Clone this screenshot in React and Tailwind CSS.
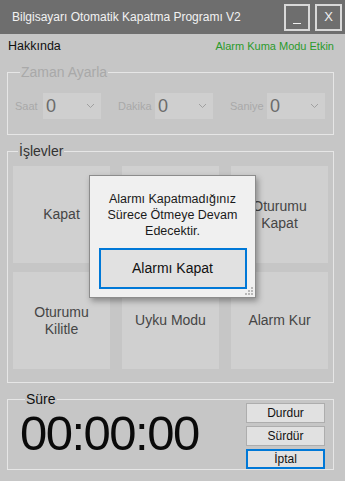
import React from 'react';

const font = { fontFamily: '"Liberation Sans", Arial, sans-serif' };

const Combo = ({ label, labelW }) => (
  <div className="flex items-center">
    <span className={`text-[11px] text-[#a9a9a9] ${labelW}`}>{label}</span>
    <div className="w-[58px] h-[26px] bg-[#cfcfcf] flex items-center justify-between pl-[3px] pr-[6px]">
      <span className="text-[18px] leading-none text-[#6b6b6b]">0</span>
      <svg width="9" height="6" viewBox="0 0 9 6">
        <path d="M1 1 L4.5 4.5 L8 1" fill="none" stroke="#a0a0a0" strokeWidth="1" />
      </svg>
    </div>
  </div>
);

const Tile = ({ children }) => (
  <div className="h-[97px] bg-[#d0d0d0] flex items-center justify-center text-center text-[14px] leading-[17px] text-[#454545]">
    {children}
  </div>
);

const SmallBtn = ({ children, active }) => (
  <div
    className={`h-[20px] flex items-center justify-center text-[12px] text-[#111] bg-[#e1e1e1] ${
      active ? 'border-2 border-[#0078d7]' : 'border border-[#adadad]'
    }`}
  >
    {children}
  </div>
);

const App = () => {
  return (
    <div className="w-[345px] h-[481px] bg-[#c6c6c6] relative overflow-hidden" style={font}>
      {/* title bar */}
      <div className="h-[34px] bg-[#6e6e6e] flex items-center pl-[12px] pr-[3px]">
        <span className="text-[12px] text-[#f2f2f2] flex-1">Bilgisayarı Otomatik Kapatma Programı V2</span>
        <div className="flex gap-[5px]">
          <div className="w-[26px] h-[27px] border-2 border-[#d9d9d9] flex items-end justify-center pb-[5px]">
            <span className="block w-[8px] h-[1px] bg-[#f0f0f0]" />
          </div>
          <div className="w-[27px] h-[27px] border-2 border-[#d9d9d9] flex items-center justify-center text-[13px] text-[#f0f0f0]">
            X
          </div>
        </div>
      </div>

      {/* menu */}
      <div className="h-[24px] flex items-center justify-between pl-[8px] pr-[11px]">
        <span className="text-[12.5px] text-[#111]">Hakkında</span>
        <span className="text-[11px] text-[#2b9a2b]">Alarm Kuma Modu Etkin</span>
      </div>

      {/* zaman ayarla */}
      <fieldset className="mx-[7px] mt-[6px] w-[327px] border border-[#e6e6e6] px-[7px] pb-[15px]">
        <legend className="ml-[5px] px-[1px] text-[14px] leading-[16px] text-[#a9a9a9]">Zaman Ayarla</legend>
        <div className="mt-[13px] flex gap-[17px]">
          <Combo label="Saat" labelW="w-[28px]" />
          <Combo label="Dakika" labelW="w-[37px]" />
          <Combo label="Saniye" labelW="w-[37px]" />
        </div>
      </fieldset>

      {/* islevler */}
      <fieldset className="mx-[7px] mt-[8px] w-[327px] border border-[#e6e6e6] px-[5px] pb-[13px]">
        <legend className="ml-[5px] px-[1px] text-[14px] leading-[16px] text-[#333]">İşlevler</legend>
        <div className="mt-[7px] grid grid-cols-3 gap-x-[12px] gap-y-[9px]">
          <Tile>Kapat</Tile>
          <Tile />
          <Tile>Oturumu<br />Kapat</Tile>
          <Tile>Oturumu<br />Kilitle</Tile>
          <Tile>Uyku Modu</Tile>
          <Tile>Alarm Kur</Tile>
        </div>
      </fieldset>

      {/* sure */}
      <fieldset className="mx-[7px] mt-[8px] w-[327px] h-[79px] border border-[#e6e6e6] pl-[12px] pr-[8px]">
        <legend className="ml-[5px] px-[1px] text-[14px] leading-[16px] text-[#111]">Süre</legend>
        <div className="flex justify-between">
          <span className="text-[49px] leading-[44px] text-[#0a0a0a] mt-[4px] tracking-[-1.5px]">00:00:00</span>
          <div className="w-[79px] flex flex-col gap-[3px] -mt-[4px]">
            <SmallBtn>Durdur</SmallBtn>
            <SmallBtn>Sürdür</SmallBtn>
            <SmallBtn active>İptal</SmallBtn>
          </div>
        </div>
      </fieldset>

      {/* alarm dialog */}
      <div className="absolute left-[89px] top-[175px] w-[167px] h-[123px] bg-[#f0f0f0] border border-[#8c8c8c] shadow-[2px_3px_6px_rgba(0,0,0,0.35)] flex flex-col items-center">
        <p className="mt-[15px] text-center text-[12.5px] leading-[16px] text-[#1a1a1a]">
          Alarmı Kapatmadığınız<br />Sürece Ötmeye Devam<br />Edecektir.
        </p>
        <div className="mt-[9px] w-[148px] h-[41px] bg-[#e1e1e1] border-2 border-[#0078d7] flex items-center justify-center text-[14px] text-[#111]">
          Alarmı Kapat
        </div>
        <svg className="absolute right-[1px] bottom-[1px]" width="10" height="10" viewBox="0 0 10 10">
          <g fill="#b8b8b8">
            <rect x="7" y="1" width="2" height="2" />
            <rect x="4" y="4" width="2" height="2" />
            <rect x="7" y="4" width="2" height="2" />
            <rect x="1" y="7" width="2" height="2" />
            <rect x="4" y="7" width="2" height="2" />
            <rect x="7" y="7" width="2" height="2" />
          </g>
        </svg>
      </div>
    </div>
  );
};

export default App;
